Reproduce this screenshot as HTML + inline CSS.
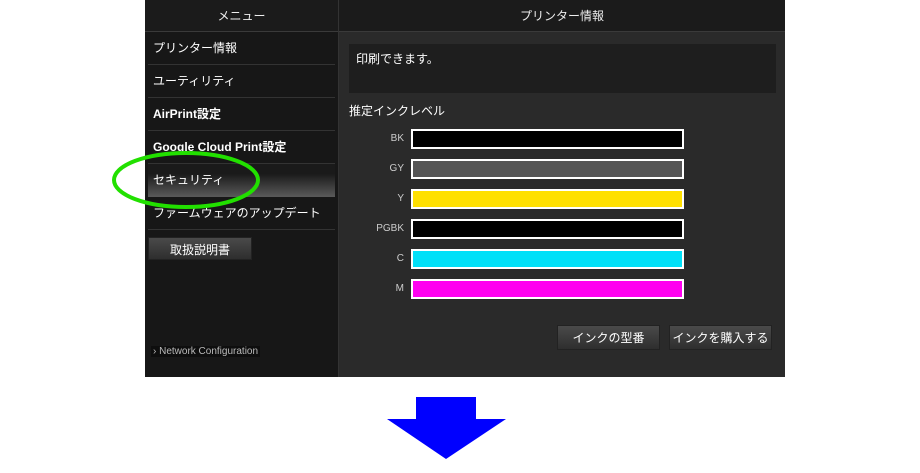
<!DOCTYPE html>
<html><head><meta charset="utf-8"><style>
*{margin:0;padding:0;box-sizing:border-box}
body{width:920px;height:473px;background:#fff;position:relative;overflow:hidden;font-family:"Liberation Sans","Noto Sans CJK JP",sans-serif;color:#fff}
.a{position:absolute}
#side{left:145px;top:0;width:193px;height:377px;background:#171717}
#main{left:338px;top:0;width:447px;height:377px;background:#2a2a2a;border-left:1px solid #333}
.hd{position:absolute;top:0;left:0;right:0;height:32px;background:#1b1b1b;border-bottom:1px solid #3a3a3a;text-align:center;font-size:12px;line-height:32px;color:#eee}
.it{position:absolute;left:3px;width:187px;height:33px;border-bottom:1px solid #333;font-size:12px;line-height:32px;padding-left:5px;color:#fff}
.b{font-weight:bold}
.btn{position:absolute;background:linear-gradient(#4a4a4a,#2e2e2e);border:1px solid #222;font-size:12px;text-align:center;line-height:24px;color:#fff}
.lbl{position:absolute;left:360px;width:44px;text-align:right;font-size:10px;color:#ccc}
.bar{position:absolute;left:411px;width:273px;height:20px;border:2px solid #fff}
</style></head><body>
<div class="a" id="side">
<div class="hd">メニュー</div>
<div class="it" style="top:32px">プリンター情報</div>
<div class="it" style="top:65px">ユーティリティ</div>
<div class="it b" style="top:98px">AirPrint設定</div>
<div class="it b" style="top:131px">Google Cloud Print設定</div>
<div class="it" style="top:164px;background:linear-gradient(#1a1a1a 30%,#5a5a5a);border:none">セキュリティ</div>
<div class="it" style="top:197px">ファームウェアのアップデート</div>
<div class="btn" style="left:3px;top:237px;width:104px;height:23px">取扱説明書</div>
<div class="a" style="left:6px;top:346px;font-size:10px;color:#bbb;background:#0e0e0e;padding:0 2px">› Network Configuration</div>
</div>
<div class="a" id="main">
<div class="hd">プリンター情報</div>
<div class="a" style="left:10px;top:44px;width:427px;height:49px;background:#1e1e1e;font-size:12px;padding:6px 7px">印刷できます。</div>
<div class="a" style="left:10px;top:102px;font-size:12px">推定インクレベル</div>
</div>
<div class="lbl" style="top:133px">BK</div><div class="bar" style="top:129px;background:#000"></div>
<div class="lbl" style="top:163px">GY</div><div class="bar" style="top:159px;background:#555"></div>
<div class="lbl" style="top:193px">Y</div><div class="bar" style="top:189px;background:#ffe000"></div>
<div class="lbl" style="top:223px">PGBK</div><div class="bar" style="top:219px;background:#000"></div>
<div class="lbl" style="top:253px">C</div><div class="bar" style="top:249px;background:#00e0f8"></div>
<div class="lbl" style="top:283px">M</div><div class="bar" style="top:279px;background:#ff00f0"></div>
<div class="btn" style="left:557px;top:325px;width:103px;height:25px">インクの型番</div>
<div class="btn" style="left:669px;top:325px;width:103px;height:25px">インクを購入する</div>
<svg class="a" style="left:0;top:0" width="920" height="473">
<ellipse cx="186" cy="180" rx="72" ry="27" fill="none" stroke="#22e000" stroke-width="4"/>
<polygon points="416,397 476,397 476,419 506,419 446,459 387,419 416,419" fill="#0000ff"/>
</svg>
</body></html>
